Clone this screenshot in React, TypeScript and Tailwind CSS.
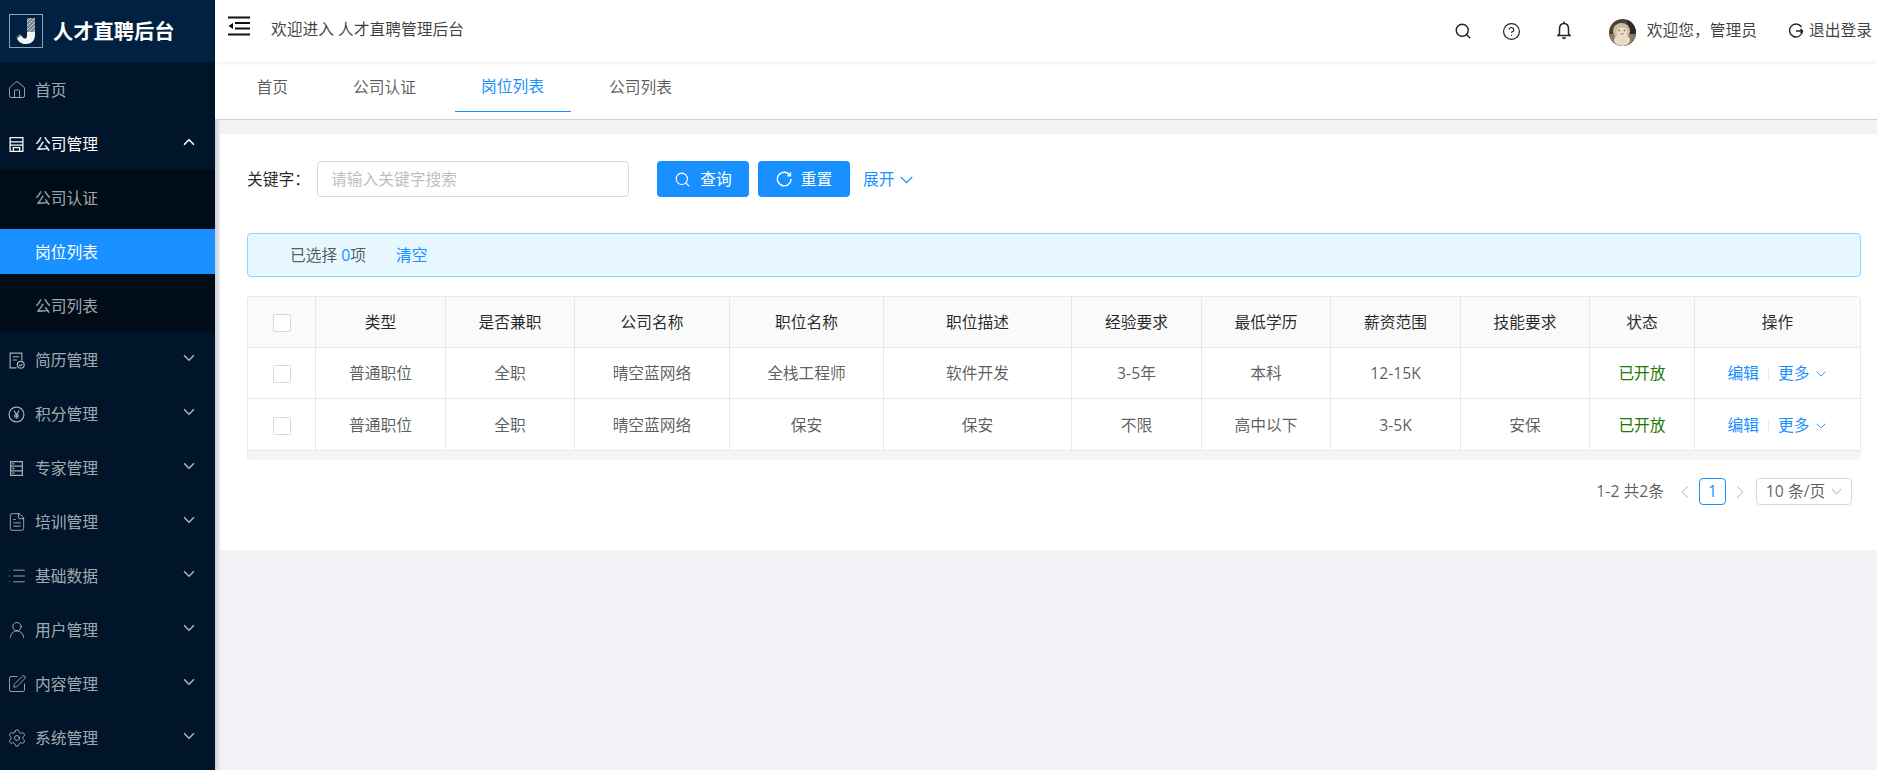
import { ChevronDown, ChevronLeft, ChevronRight, ChevronUp, CircleHelp, FileText, Home, List, Search, Settings, SquarePen, UserRound } from "lucide-react";
import type { ReactNode } from "react";

const ICON = "h-[17px] w-[17px] shrink-0";
const LUCIDE = "-mx-[1.5px] h-5 w-5 shrink-0";

function StoreIcon() {
  return (
    <svg viewBox="0 0 16 16" className={ICON} fill="none" stroke="currentColor" strokeWidth="1.2">
      <path d="M2 1.5h12v13H2zM2 5.5h12M2 8.500h12M5 14.5V11h6v3.500" />
    </svg>
  );
}

function ResumeIcon() {
  return (
    <svg viewBox="0 0 16 16" className={ICON} fill="none" stroke="currentColor" strokeWidth="1.1">
      <path d="M8 15H2V1h11v7M4.5 4.5h6M4.5 7.5h4" />
      <circle cx="12" cy="12" r="3.2" />
      <path d="M10.6 12l1 1 1.8-1.8" />
    </svg>
  );
}

function YenIcon() {
  return (
    <svg viewBox="0 0 16 16" className={ICON} fill="none" stroke="currentColor" strokeWidth="1.1">
      <circle cx="8" cy="8" r="7" />
      <path d="M5.6 4.4L8 8l2.4-3.6M8 8v4M5.8 8.6h4.4M5.8 10.3h4.4" />
    </svg>
  );
}

function ExpertIcon() {
  return (
    <svg viewBox="0 0 16 16" className={ICON} fill="none" stroke="currentColor" strokeWidth="1.2">
      <path d="M2.500 1.500h11v13h-11zM2.500 5.800h11M2.500 10.200h11M4 3.700h2M4 8h2M4 12.300h2" />
    </svg>
  );
}

function Caret({ className }: { className: string }) {
  return (
    <svg viewBox="0 0 12 7" className={className} fill="none" stroke="currentColor" strokeWidth="1.1">
      <path d="M0.700 0.700L6 6l5.300-5.300" />
    </svg>
  );
}

const MENU: { label: string; icon: ReactNode; children?: string[] }[] = [
  { label: "首页", icon: <Home className={LUCIDE} strokeWidth={1.1} /> },
  { label: "公司管理", icon: <StoreIcon />, children: ["公司认证", "岗位列表", "公司列表"] },
  { label: "简历管理", icon: <ResumeIcon /> },
  { label: "积分管理", icon: <YenIcon /> },
  { label: "专家管理", icon: <ExpertIcon /> },
  { label: "培训管理", icon: <FileText className={LUCIDE} strokeWidth={1.1} /> },
  { label: "基础数据", icon: <List className={LUCIDE} strokeWidth={1.1} /> },
  { label: "用户管理", icon: <UserRound className={LUCIDE} strokeWidth={1.1} /> },
  { label: "内容管理", icon: <SquarePen className={LUCIDE} strokeWidth={1.1} /> },
  { label: "系统管理", icon: <Settings className={LUCIDE} strokeWidth={1.1} /> },
];

const COLUMNS = [
  { title: "类型", width: "w-[130px]" },
  { title: "是否兼职", width: "w-[129px]" },
  { title: "公司名称", width: "w-[155px]" },
  { title: "职位名称", width: "w-[154px]" },
  { title: "职位描述", width: "w-[188px]" },
  { title: "经验要求", width: "w-[130px]" },
  { title: "最低学历", width: "w-[129px]" },
  { title: "薪资范围", width: "w-[130px]" },
  { title: "技能要求", width: "w-[129px]" },
  { title: "状态", width: "w-[105px]" },
];

const ROWS = [
  ["普通职位", "全职", "晴空蓝网络", "全栈工程师", "软件开发", "3-5年", "本科", "12-15K", ""],
  ["普通职位", "全职", "晴空蓝网络", "保安", "保安", "不限", "高中以下", "3-5K", "安保"],
];

function Logo() {
  return (
    <svg viewBox="0 0 34 34" className="h-[34px] w-[34px] shrink-0" fill="none">
      <rect x="0.5" y="0.5" width="33" height="33" stroke="#8fa3b5" />
      <path d="M18 4h8v17c0 6-4 9-9 9-4 0-8-2-9-6l4-3c1 2 3 4 4.500 3.500 1.500-.5 1.500-2 1.500-4z" fill="#f2f4f5" />
      <path d="M18 4h8v14h-8z" fill="#77838f" />
      <path d="M18 8l4-4M18 12l8-8M18 16l8-8M20 18l6-6M24 18l2-2" stroke="#c8ced4" strokeWidth="1" />
      <path d="M8 24c1-2 2-3 4-3" stroke="#5f7080" strokeWidth="1.500" />
    </svg>
  );
}

function Avatar() {
  return (
    <svg viewBox="0 0 27 27" className="h-[27px] w-[27px] shrink-0 rounded-full">
      <rect width="27" height="27" fill="#4a4238" />
      <rect x="18" y="0" width="9" height="27" fill="#2f2c28" />
      <rect x="0" y="15" width="27" height="12" fill="#8a7a68" />
      <ellipse cx="12.500" cy="12" rx="8.500" ry="8" fill="#cdbb9e" />
      <ellipse cx="13" cy="21" rx="8" ry="6" fill="#e8dcc6" />
      <ellipse cx="13" cy="13" rx="5.500" ry="4.500" fill="#ecdfc6" />
      <circle cx="10" cy="11.500" r="0.800" fill="#5a4838" />
      <circle cx="15.500" cy="11.500" r="0.800" fill="#5a4838" />
      <path d="M11 14.500q2 1.500 4 0" stroke="#8a6f58" strokeWidth="0.700" fill="none" />
      <rect x="0" y="19" width="5" height="8" fill="#a46f60" />
    </svg>
  );
}

function Sidebar() {
  return (
    <aside className="flex w-[215px] shrink-0 flex-col bg-[#001529] text-[rgba(255,255,255,0.65)]">
      <div className="flex h-[62px] items-center gap-[10px] bg-[#002140] pl-[9px]">
        <Logo />
        <span className="pt-[1px] text-[20.25px] font-bold text-white">人才直聘后台</span>
      </div>
      {MENU.map((item) => (
        <div key={item.label}>
          <div className={`flex h-[54px] items-center pt-[2px] pl-2 pr-[17px] ${item.children ? "text-white" : ""}`}>
            {item.icon}
            <span className="ml-[10px] flex-1 pt-[2px]">{item.label}</span>
            {item.label !== "首页" &&
              (item.children ? (
                <ChevronUp className="mb-[5px] h-[18px] w-[18px]" strokeWidth={2.2} />
              ) : (
                <ChevronDown className="mb-[5px] h-[18px] w-[18px]" strokeWidth={2.2} />
              ))}
          </div>
          {item.children && (
            <div className="bg-[#000c17]">
              {item.children.map((child) => (
                <div key={child} className="flex h-[54px] items-center">
                  <div className={`flex h-[45px] w-full items-center pt-[4px] pl-[35px] ${child === "岗位列表" ? "bg-[#1890ff] text-white" : ""}`}>
                    {child}
                  </div>
                </div>
              ))}
            </div>
          )}
        </div>
      ))}
    </aside>
  );
}

function Header() {
  return (
    <header className="relative z-10 flex h-[62px] shrink-0 items-center bg-white pr-[5px] pl-3 text-[rgba(0,0,0,0.75)] shadow-[0_1px_4px_rgba(0,21,41,0.08)]">
      <svg viewBox="0 0 24 20" className="mb-[11px] h-5 w-6 shrink-0" fill="none" stroke="#111" strokeWidth="2">
        <path d="M1 1.500h22M8 7h15M8 12.500h15M1 18.500h22" />
        <path d="M6 7v6L1.500 10z" fill="#111" stroke="none" />
      </svg>
      <span className="mb-[2px] ml-[20px] flex-1">欢迎进入 人才直聘管理后台</span>
      <Search className="mr-[30px] h-[18px] w-[18px] text-[#222]" strokeWidth={1.9} />
      <CircleHelp className="mr-[35px] h-[19px] w-[19px] text-[#222]" strokeWidth={1.5} />
      <svg viewBox="0 0 16 20" className="mr-[37px] mb-[2px] h-[20px] w-[16px] shrink-0" fill="none" stroke="#222" strokeWidth="1.500">
        <path d="M8 1.500v2M3.500 9c0-3.500 1.800-5.500 4.500-5.500s4.500 2 4.500 5.500v4.500l1.500 2H2l1.500-2z" />
        <path d="M6 17.200a2 2 0 0 0 4 0z" fill="#222" stroke="none" />
      </svg>
      <div className="mt-[3px] mr-[11px]">
        <Avatar />
      </div>
      <span className="mr-[31px]">欢迎您，管理员</span>
      <svg viewBox="0 0 16 16" className="mr-[5px] h-4 w-4 shrink-0" fill="none" stroke="#222" strokeWidth="1.400">
        <path d="M13.500 4A6.500 6.500 0 1 0 14.500 8H8M12.500 6l2 2-2 2" />
      </svg>
      <span>退出登录</span>
    </header>
  );
}

function Tabs() {
  const tabs = ["首页", "公司认证", "岗位列表", "公司列表"];
  return (
    <nav className="flex h-[58px] shrink-0 gap-3 border-b border-[#d0d0d0] bg-white pl-[15px] text-[rgba(0,0,0,0.65)]">
      {tabs.map((tab) => (
        <div
          key={tab}
          className={`flex h-[50px] items-center whitespace-nowrap px-[26.5px] pt-1 pb-[3px] ${tab === "岗位列表" ? "border-b border-[#1890ff] text-[#1890ff]" : ""}`}
        >
          {tab}
        </div>
      ))}
    </nav>
  );
}

function Checkbox() {
  return <span className="mx-auto block h-[18px] w-[18px] rounded-[2px] border border-[#d9d9d9] bg-white" />;
}

function RecruitTable() {
  const cell = "border-r border-b border-[#e8e8e8] pt-[2px] text-center font-normal";
  return (
    <div className="overflow-hidden rounded-[4px] border-t border-l border-[#e8e8e8] bg-[#f5f5f5] pb-[9px]">
      <table className="w-full table-fixed border-separate border-spacing-0">
        <colgroup>
          <col className="w-[68px]" />
          {COLUMNS.map((c) => (
            <col key={c.title} className={c.width} />
          ))}
          <col />
        </colgroup>
        <thead>
          <tr className="h-[51px] bg-[#fafafa] text-[rgba(0,0,0,0.85)]">
            <th className={cell}>
              <Checkbox />
            </th>
            {COLUMNS.map((c) => (
              <th key={c.title} className={cell}>
                {c.title}
              </th>
            ))}
            <th className={cell}>操作</th>
          </tr>
        </thead>
        <tbody className="bg-white text-[rgba(0,0,0,0.65)]">
          {ROWS.map((row, i) => (
            <tr key={i} className={i === 0 ? "h-[51px]" : "h-[52px]"}>
              <td className={`${cell} bg-white`}>
                <Checkbox />
              </td>
              {row.map((value, j) => (
                <td key={j} className={`${cell} bg-white`}>
                  {value}
                </td>
              ))}
              <td className={`${cell} bg-white text-[#237804]`}>已开放</td>
              <td className={`${cell} bg-white text-[#1890ff]`}>
                <span className="inline-flex items-center pr-[2px]">
                  编辑
                  <span className="mx-[9px] h-[14px] w-px bg-[#e8e8e8]" />
                  更多
                  <Caret className="ml-[6px] h-[6px] w-[10px]" />
                </span>
              </td>
            </tr>
          ))}
        </tbody>
      </table>
    </div>
  );
}

function Pagination() {
  return (
    <div className="mr-[9px] flex h-[27px] items-center justify-end text-[rgba(0,0,0,0.65)]">
      <span className="mr-[10px]">1-2 共2条</span>
      <ChevronLeft className="h-[22px] w-[22px] text-[#bfbfbf]" strokeWidth={1.1} />
      <span className="mx-[3px] flex h-[27px] w-[27px] items-center justify-center rounded-[4px] border border-[#1890ff] text-[#1890ff]">1</span>
      <ChevronRight className="h-[22px] w-[22px] text-[#bfbfbf]" strokeWidth={1.1} />
      <span className="ml-[5px] flex h-[27px] w-[96px] items-center justify-center gap-[6px] rounded-[4px] border border-[#d9d9d9]">
        10 条/页
        <Caret className="h-[7px] w-[11px] text-[#bfbfbf]" />
      </span>
    </div>
  );
}

export default function App() {
  return (
    <div className="flex h-[770px] overflow-hidden font-['Open_Sans','Noto_Sans_CJK_SC',sans-serif] text-[15.75px] leading-[1.5]">
      <Sidebar />
      <main className="flex min-w-0 flex-1 flex-col bg-[#f0f2f5]">
        <Header />
        <Tabs />
        <section className="flex-1 pt-[14px] pl-[5px] shadow-[inset_6px_0_5px_-4px_rgba(0,21,41,0.2)]">
          <div className="h-[416px] bg-white pt-[27px] pr-[16px] pl-[27px]">
            <div className="flex h-[36px] items-center">
              <span className="w-[70px] pt-[2px] text-[rgba(0,0,0,0.85)]">关键字：</span>
              <span className="flex h-[36px] w-[312px] items-center rounded-[4px] border border-[#d9d9d9] pt-[2px] pl-[13px] text-[#bfbfbf]">请输入关键字搜索</span>
              <button className="ml-[28px] flex h-[36px] w-[92px] items-center justify-center gap-[9px] rounded-[4px] bg-[#1890ff] text-white">
                <Search className="h-[17px] w-[17px]" strokeWidth={1.5} />
                <span className="pt-[2px]">查询</span>
              </button>
              <button className="ml-[9px] flex h-[36px] w-[92px] items-center justify-center gap-[9px] rounded-[4px] bg-[#1890ff] text-white">
                <svg viewBox="0 0 16 16" className="h-[16px] w-[16px]" fill="none" stroke="white" strokeWidth="1.400">
                  <path d="M14 4.500A6.800 6.800 0 1 0 15 8M14.500 1.500v3.200h-3.200" />
                </svg>
                <span className="pt-[2px]">重置</span>
              </button>
              <span className="ml-[13px] flex items-center gap-[5px] pt-[2px] text-[#1890ff]">
                展开
                <Caret className="h-2 w-[13px]" />
              </span>
            </div>
            <div className="mt-[36px] flex h-[44px] items-center rounded-[4px] border border-[#91d5ff] bg-[#e6f7ff] pt-[2px] pl-[42px] text-[rgba(0,0,0,0.65)]">
              已选择&nbsp;<span className="text-[#1890ff]">0</span>项
              <span className="ml-[30px] text-[#1890ff]">清空</span>
            </div>
            <div className="mt-[19px]">
              <RecruitTable />
            </div>
            <div className="mt-[18px]">
              <Pagination />
            </div>
          </div>
        </section>
      </main>
    </div>
  );
}
